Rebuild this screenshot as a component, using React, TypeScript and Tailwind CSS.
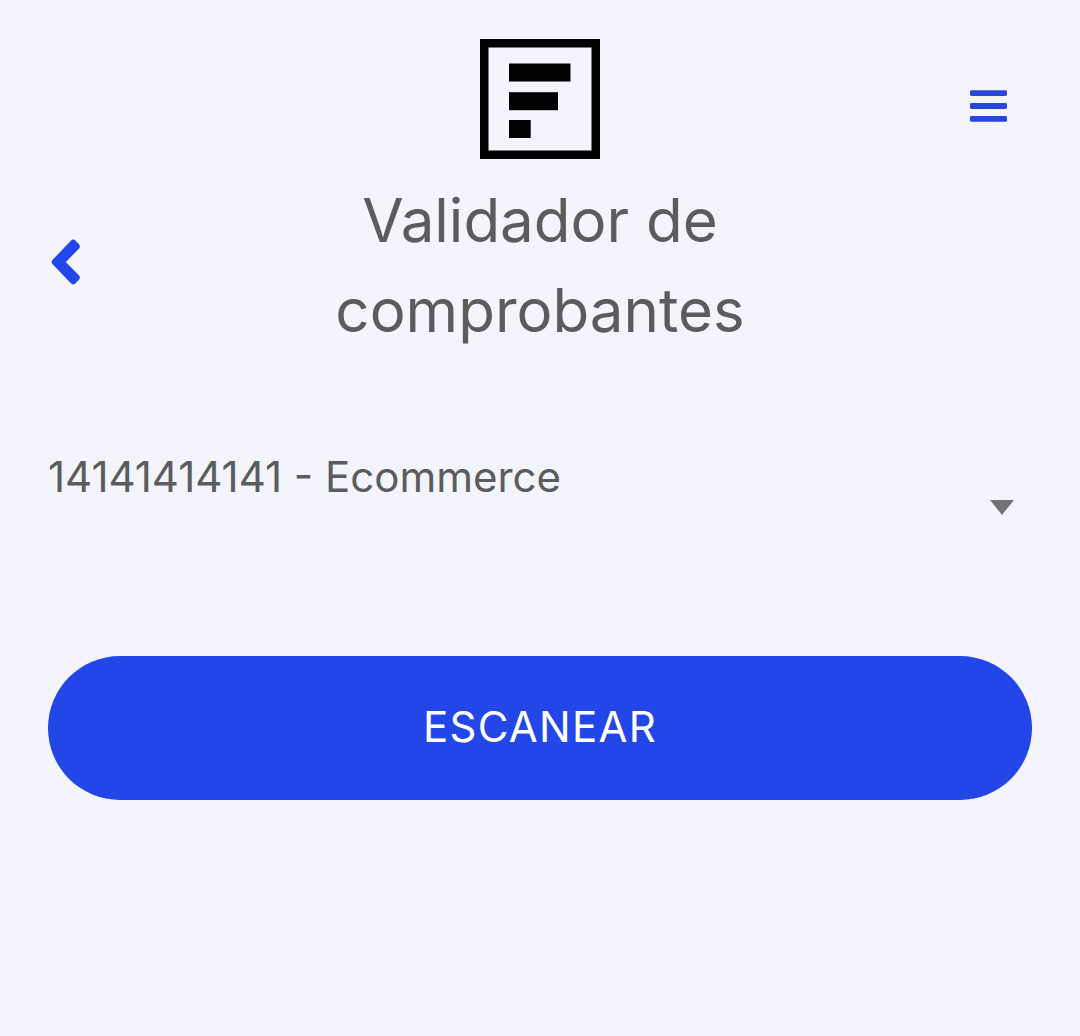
function Logo() {
  return (
    <svg className="block h-[120px] w-[120px]" viewBox="0 0 120 120" role="img" aria-label="F">
      <rect x="4.25" y="4.25" width="111.5" height="111.5" fill="none" stroke="#000" strokeWidth="8.5" />
      <rect x="29" y="24.5" width="61.5" height="18" />
      <rect x="29" y="53.2" width="49" height="18" />
      <rect x="29" y="81" width="21.7" height="18" />
    </svg>
  );
}

function MenuIcon() {
  return (
    <svg className="block h-8 w-[37px]" viewBox="0 0 37 32" fill="#2846dc" aria-hidden="true">
      <rect y="0.2" width="37" height="5.8" rx="1.4" />
      <rect y="13.1" width="37" height="5.8" rx="1.4" />
      <rect y="26" width="37" height="5.8" rx="1.4" />
    </svg>
  );
}

function BackIcon() {
  return (
    <svg className="block h-[46px] w-[30px]" viewBox="0 0 30 46" fill="#2346e8" aria-hidden="true">
      <path d="M1.4 21.1 19.6 1.9Q22.2-.7 24.8 1.9L27.6 4.7Q30.2 7.5 27.6 10.1L14.8 23 27.6 35.9Q30.2 38.5 27.6 41.3L24.8 44.1Q22.2 46.7 19.6 44.1L1.4 24.9Q-.1 23 1.4 21.1Z" />
    </svg>
  );
}

export default function App() {
  return (
    <div className="min-h-[1036px] bg-[#f3f4fc] px-12 pt-[39px] font-['Inter',sans-serif] text-[#5b5c5d]">
      <header className="grid grid-cols-[1fr_120px_1fr]">
        <span />
        <Logo />
        <button type="button" aria-label="Menú" className="mt-[51px] mr-[25px] self-start justify-self-end">
          <MenuIcon />
        </button>
      </header>

      <div className="mt-4 grid grid-cols-[200px_1fr_200px] items-center">
        <button type="button" aria-label="Volver" className="-mt-[6px] ml-[3px] justify-self-start">
          <BackIcon />
        </button>
        <h1 className="text-center text-[60px] leading-[90px]">
          Validador de
          <br />
          comprobantes
        </h1>
      </div>

      <div className="mt-[90px] flex h-[90px] justify-between">
        <span className="text-[42px] leading-[63px]">14141414141 - Ecommerce</span>
        <svg className="mt-[55px] mr-[18px] h-[15px] w-6" viewBox="0 0 24 15" fill="#727375" aria-hidden="true">
          <path d="M0 0h24L12 15Z" />
        </svg>
      </div>

      <button type="button" className="mt-[121px] flex h-36 w-full items-center justify-center rounded-full bg-[#2346e8] pb-[3px] text-[42px] tracking-[1.26px] text-white">
        ESCANEAR
      </button>
    </div>
  );
}
